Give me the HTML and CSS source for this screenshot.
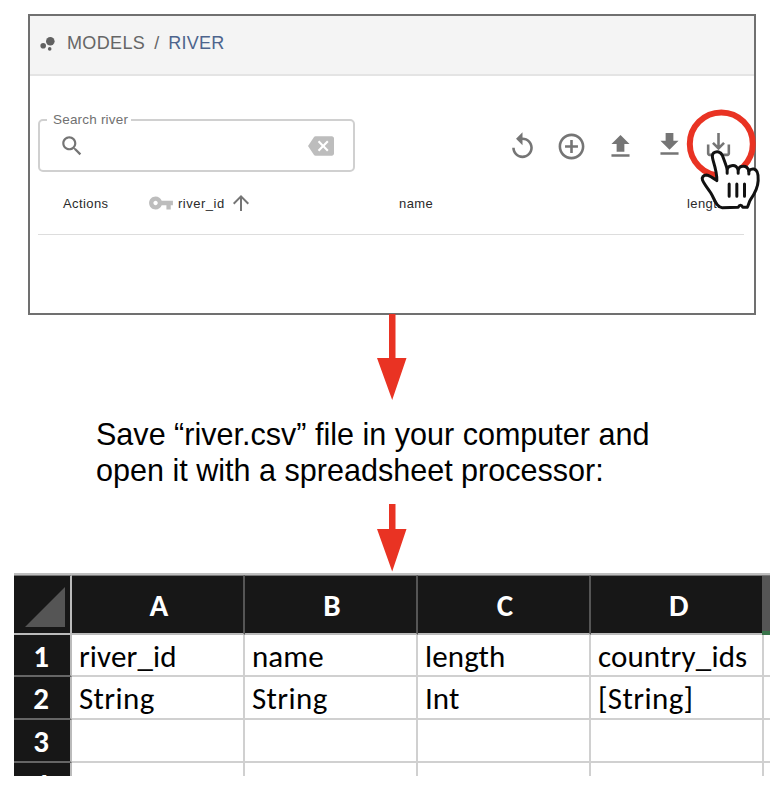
FILE: index.html
```
<!DOCTYPE html>
<html lang="en">
<head>
<meta charset="utf-8">
<title>Models / River</title>
<link rel="stylesheet" href="styles.css">
</head>
<body>
<main class="page">
  <section class="panel">
    <header class="crumbs">
      <svg class="bubbles" viewBox="0 0 16 16"><circle cx="10.3" cy="5.2" r="4.3"/><circle cx="3.2" cy="9.7" r="2.8"/><circle cx="9.7" cy="12.9" r="1.8"/></svg>
      <span class="models">MODELS</span><span class="slash">/</span><span class="river">RIVER</span>
    </header>
    <div class="toolbar">
      <fieldset class="search">
        <legend>Search river</legend>
        <div class="search-row">
          <svg class="icon26" viewBox="0 0 24 24"><path d="M15.5 14h-.79l-.28-.27C15.41 12.59 16 11.11 16 9.5 16 5.91 13.09 3 9.5 3S3 5.91 3 9.5 5.91 16 9.5 16c1.61 0 3.09-.59 4.23-1.57l.27.28v.79l5 4.99L20.49 19l-4.99-5zm-6 0C7.01 14 5 11.99 5 9.5S7.01 5 9.5 5 14 7.01 14 9.5 11.99 14 9.5 14z"/></svg>
          <svg class="icon26 pale" viewBox="0 0 24 24"><path d="M22 3H7c-.69 0-1.23.35-1.59.88L0 12l5.41 8.11c.36.53.9.89 1.59.89h15c1.1 0 2-.9 2-2V5c0-1.1-.9-2-2-2zm-3 12.59L17.59 17 14 13.41 10.41 17 9 15.59 12.59 12 9 8.41 10.41 7 14 10.59 17.59 7 19 8.41 15.41 12 19 15.59z"/></svg>
        </div>
      </fieldset>
      <div class="tools">
        <svg viewBox="0 0 24 24"><path d="M12 5V1L7 6l5 5V7c3.31 0 6 2.69 6 6s-2.69 6-6 6-6-2.69-6-6H4c0 4.42 3.58 8 8 8s8-3.58 8-8-3.58-8-8-8z"/></svg>
        <svg viewBox="0 0 24 24"><path d="M13 7h-2v4H7v2h4v4h2v-4h4v-2h-4V7zm-1-5C6.48 2 2 6.48 2 12s4.48 10 10 10 10-4.480 10-10S17.520 2 12 2zm0 18c-4.410 0-8-3.590-8-8s3.590-8 8-8 8 3.590 8 8-3.590 8-8 8z"/></svg>
        <svg viewBox="0 0 24 24"><path d="M9 16v-6H5l7-7 7 7h-4v6H9zM5 20v-2h14v2H5z"/></svg>
        <svg class="raised" viewBox="0 0 24 24"><path d="M5 20h14v-2H5v2zM19 9h-4V3H9v6H5l7 7 7-7z"/></svg>
        <svg class="raised" viewBox="0 0 24 24"><path d="M19 12v7H5v-7H3v7c0 1.100.9 2 2 2h14c1.100 0 2-.9 2-2v-7h-2zm-6 .67l2.590-2.580L17 11.500l-5 5-5-5 1.410-1.410L11 12.670V3h2z"/></svg>
      </div>
    </div>
    <div class="columns">
      <span class="c-actions">Actions</span>
      <span class="c-id">
        <svg class="key" viewBox="0 0 24 24"><path d="M12.65 10C11.83 7.67 9.61 6 7 6c-3.31 0-6 2.69-6 6s2.69 6 6 6c2.61 0 4.83-1.67 5.65-4H17v4h4v-4h2v-4H12.65zM7 14c-1.1 0-2-.9-2-2s.9-2 2-2 2 .9 2 2-.9 2-2 2z"/></svg>
        <span class="id-label">river_id</span>
        <svg class="up" viewBox="0 0 24 24"><path d="M4 12l1.41 1.41L11 7.83V20h2V7.83l5.58 5.59L20 12l-8-8-8 8z"/></svg>
      </span>
      <span class="c-name">name</span>
      <span>length</span>
    </div>
    <svg class="pointer" viewBox="0 0 80 110">
      <circle cx="36.300" cy="38" r="31.500" fill="none" stroke="#e93323" stroke-width="6"/>
      <g transform="translate(-5.500 -6) scale(.33333)" fill="#fff" stroke="#111" stroke-width="9" stroke-linejoin="round" stroke-linecap="round">
        <path d="M112 242C104 236 90 226 81 225C72 225 66 232 69 240C73 251 84 264 94 279C103 294 105 304 113 314C118 320 121 323 128 323L176 322C180 314 186 314 190 322L203 322C207 316 208 307 213 299C223 285 235 264 236 242C237 224 234 209 223 207C216 206 211 209 208 213C205 202 200 198 190 199C183 199 179 202 176 209C172 199 165 195 156 197C149 198 145 202 143 207C139 193 134 180 129 167C124 155 112 152 102 159C97 164 98 172 101 182C107 202 113 224 112 242Z"/>
        <path d="M143 207L143 220M176 209L176 220M208 213L208 222M149 252V289M172 252V289M195 252V289" fill="none"/>
      </g>
    </svg>
  </section>
  <svg class="arrow arrow-long" viewBox="0 0 32 86"><path d="M13 0h6.500v44h11L16.200 86 1 44h12z"/></svg>
  <p class="caption">Save “river.csv” file in your computer and<br>open it with a spreadsheet processor:</p>
  <svg class="arrow arrow-short" viewBox="0 0 32 68"><path d="M13 0h6.500v25h11L16.200 67.500 1 25h12z"/></svg>
  <section class="sheet">
    <div class="h corner"><svg viewBox="0 0 40 40"><path d="M40 0v40H0z"/></svg></div>
    <div class="h">A</div><div class="h">B</div><div class="h">C</div><div class="h last">D</div><div class="h next"></div>
    <div class="n">1</div><div class="c">river_id</div><div class="c">name</div><div class="c">length</div><div class="c">country_ids</div><div class="c"></div>
    <div class="n">2</div><div class="c string">String</div><div class="c string">String</div><div class="c">Int</div><div class="c string">[String]</div><div class="c"></div>
    <div class="n">3</div><div class="c"></div><div class="c"></div><div class="c"></div><div class="c"></div><div class="c"></div>
    <div class="n">4</div><div class="c"></div><div class="c"></div><div class="c"></div><div class="c"></div><div class="c"></div>
  </section>
</main>
</body>
</html>
```
FILE: styles.css
```
* { box-sizing: border-box; }
body { margin: 0; background: #fff; font-family: "Liberation Sans", Arial, sans-serif; }
svg { display: block; flex: none; fill: #757575; }
.page { width: 780px; height: 788px; padding: 14px 10px 0 14px; overflow: hidden; }
.panel { position: relative; width: 728px; height: 301px; margin-left: 14px; border: 2px solid #707070; }
.crumbs { display: flex; align-items: center; height: 60px; padding: 0 0 3px 10px; background: #f4f4f4; border-bottom: 2px solid #e4e4e4; font-size: 18px; color: #666; }
.bubbles { width: 16px; height: 16px; margin-top: 1px; fill: #616161; }
.models { margin-left: 11px; letter-spacing: .35px; }
.slash { margin-left: 9px; }
.river { margin-left: 9px; color: #4d648d; letter-spacing: .25px; }
.toolbar { display: flex; height: 96px; padding: 36px 0 0 8px; }
.search { width: 317px; height: 60px; margin: 0; padding: 0 19px 0 19px; border: 2px solid #d0d0d0; border-radius: 5px; }
.search legend { margin-left: -12px; padding: 0 3px 0 6px; font-size: 13.5px; line-height: 16px; letter-spacing: .2px; color: #717171; white-space: nowrap; }
.search-row { display: flex; justify-content: space-between; padding-top: 5px; }
.icon26 { width: 26px; height: 26px; }
.pale { fill: #bdbdbd; }
.tools { display: flex; gap: 18.200px; margin: 18.500px 0 0 151.700px; }
.tools svg { width: 31px; height: 31px; }
.tools .raised { margin-top: -1.500px; }
.columns { display: flex; align-items: center; width: 706px; height: 63px; margin-left: 8px; padding: 0 0 0 25px; border-bottom: 1px solid #ddd; font-size: 13px; letter-spacing: .4px; color: #2a2a2a; }
.c-actions { width: 85px; }
.c-id { display: flex; align-items: center; width: 251px; }
.id-label { letter-spacing: .5px; }
.c-name { width: 288px; }
.key { width: 26px; height: 26px; margin-right: 4px; fill: #bdbdbd; }
.up { width: 24px; height: 24px; margin-left: 4px; }
.pointer { position: absolute; left: 655px; top: 90px; width: 80px; height: 110px; }
.arrow { width: 32px; margin-left: 362px; }
.arrow path { fill: #e93323; }
.arrow-long { position: relative; height: 86px; margin-top: -1px; }
.caption { margin: 16px 0 0 82px; font-size: 30.550px; line-height: 36px; color: #000; white-space: nowrap; }
.arrow-short { height: 68px; margin-top: 16px; }
.sheet { display: grid; grid-template-columns: 58.400px repeat(4, 173px) 6px; grid-template-rows: 59.500px repeat(3, 42.700px) 42.700px; width: 756px; height: 203px; margin-top: 1px; overflow: hidden; border-top: 2px solid #bebebe; font-family: Carlito, Lato, sans-serif; font-size: 31px; color: #000; }
.h { display: flex; align-items: center; justify-content: center; padding: 1px 0 0 2px; background: #171717; color: #fff; font-weight: 700; border-top: 1px solid #777; border-bottom: 2px solid #bbb; border-right: 2px solid #555; }
.corner { justify-content: flex-end; padding: 6px 5px 0 0; border-right-color: #bbb; }
.corner svg { width: 40px; height: 40px; fill: #555; }
.h.last { border-right: 0; }
.next { margin-left: -2px; background: #555; border-right: 0; border-bottom: 4px solid #39734a; }
.n { display: flex; justify-content: center; padding-right: 2px; background: #171717; color: #fff; font-weight: 700; line-height: 42px; border-right: 2px solid #bbb; border-bottom: 2px solid #666; }
.c { padding-left: 6.500px; line-height: 43px; letter-spacing: .15px; border-right: 2px solid #d0d0d0; border-bottom: 2px solid #d0d0d0; }
.string { letter-spacing: .4px; }
.c:nth-child(6n) { border-right: 0; }
```
